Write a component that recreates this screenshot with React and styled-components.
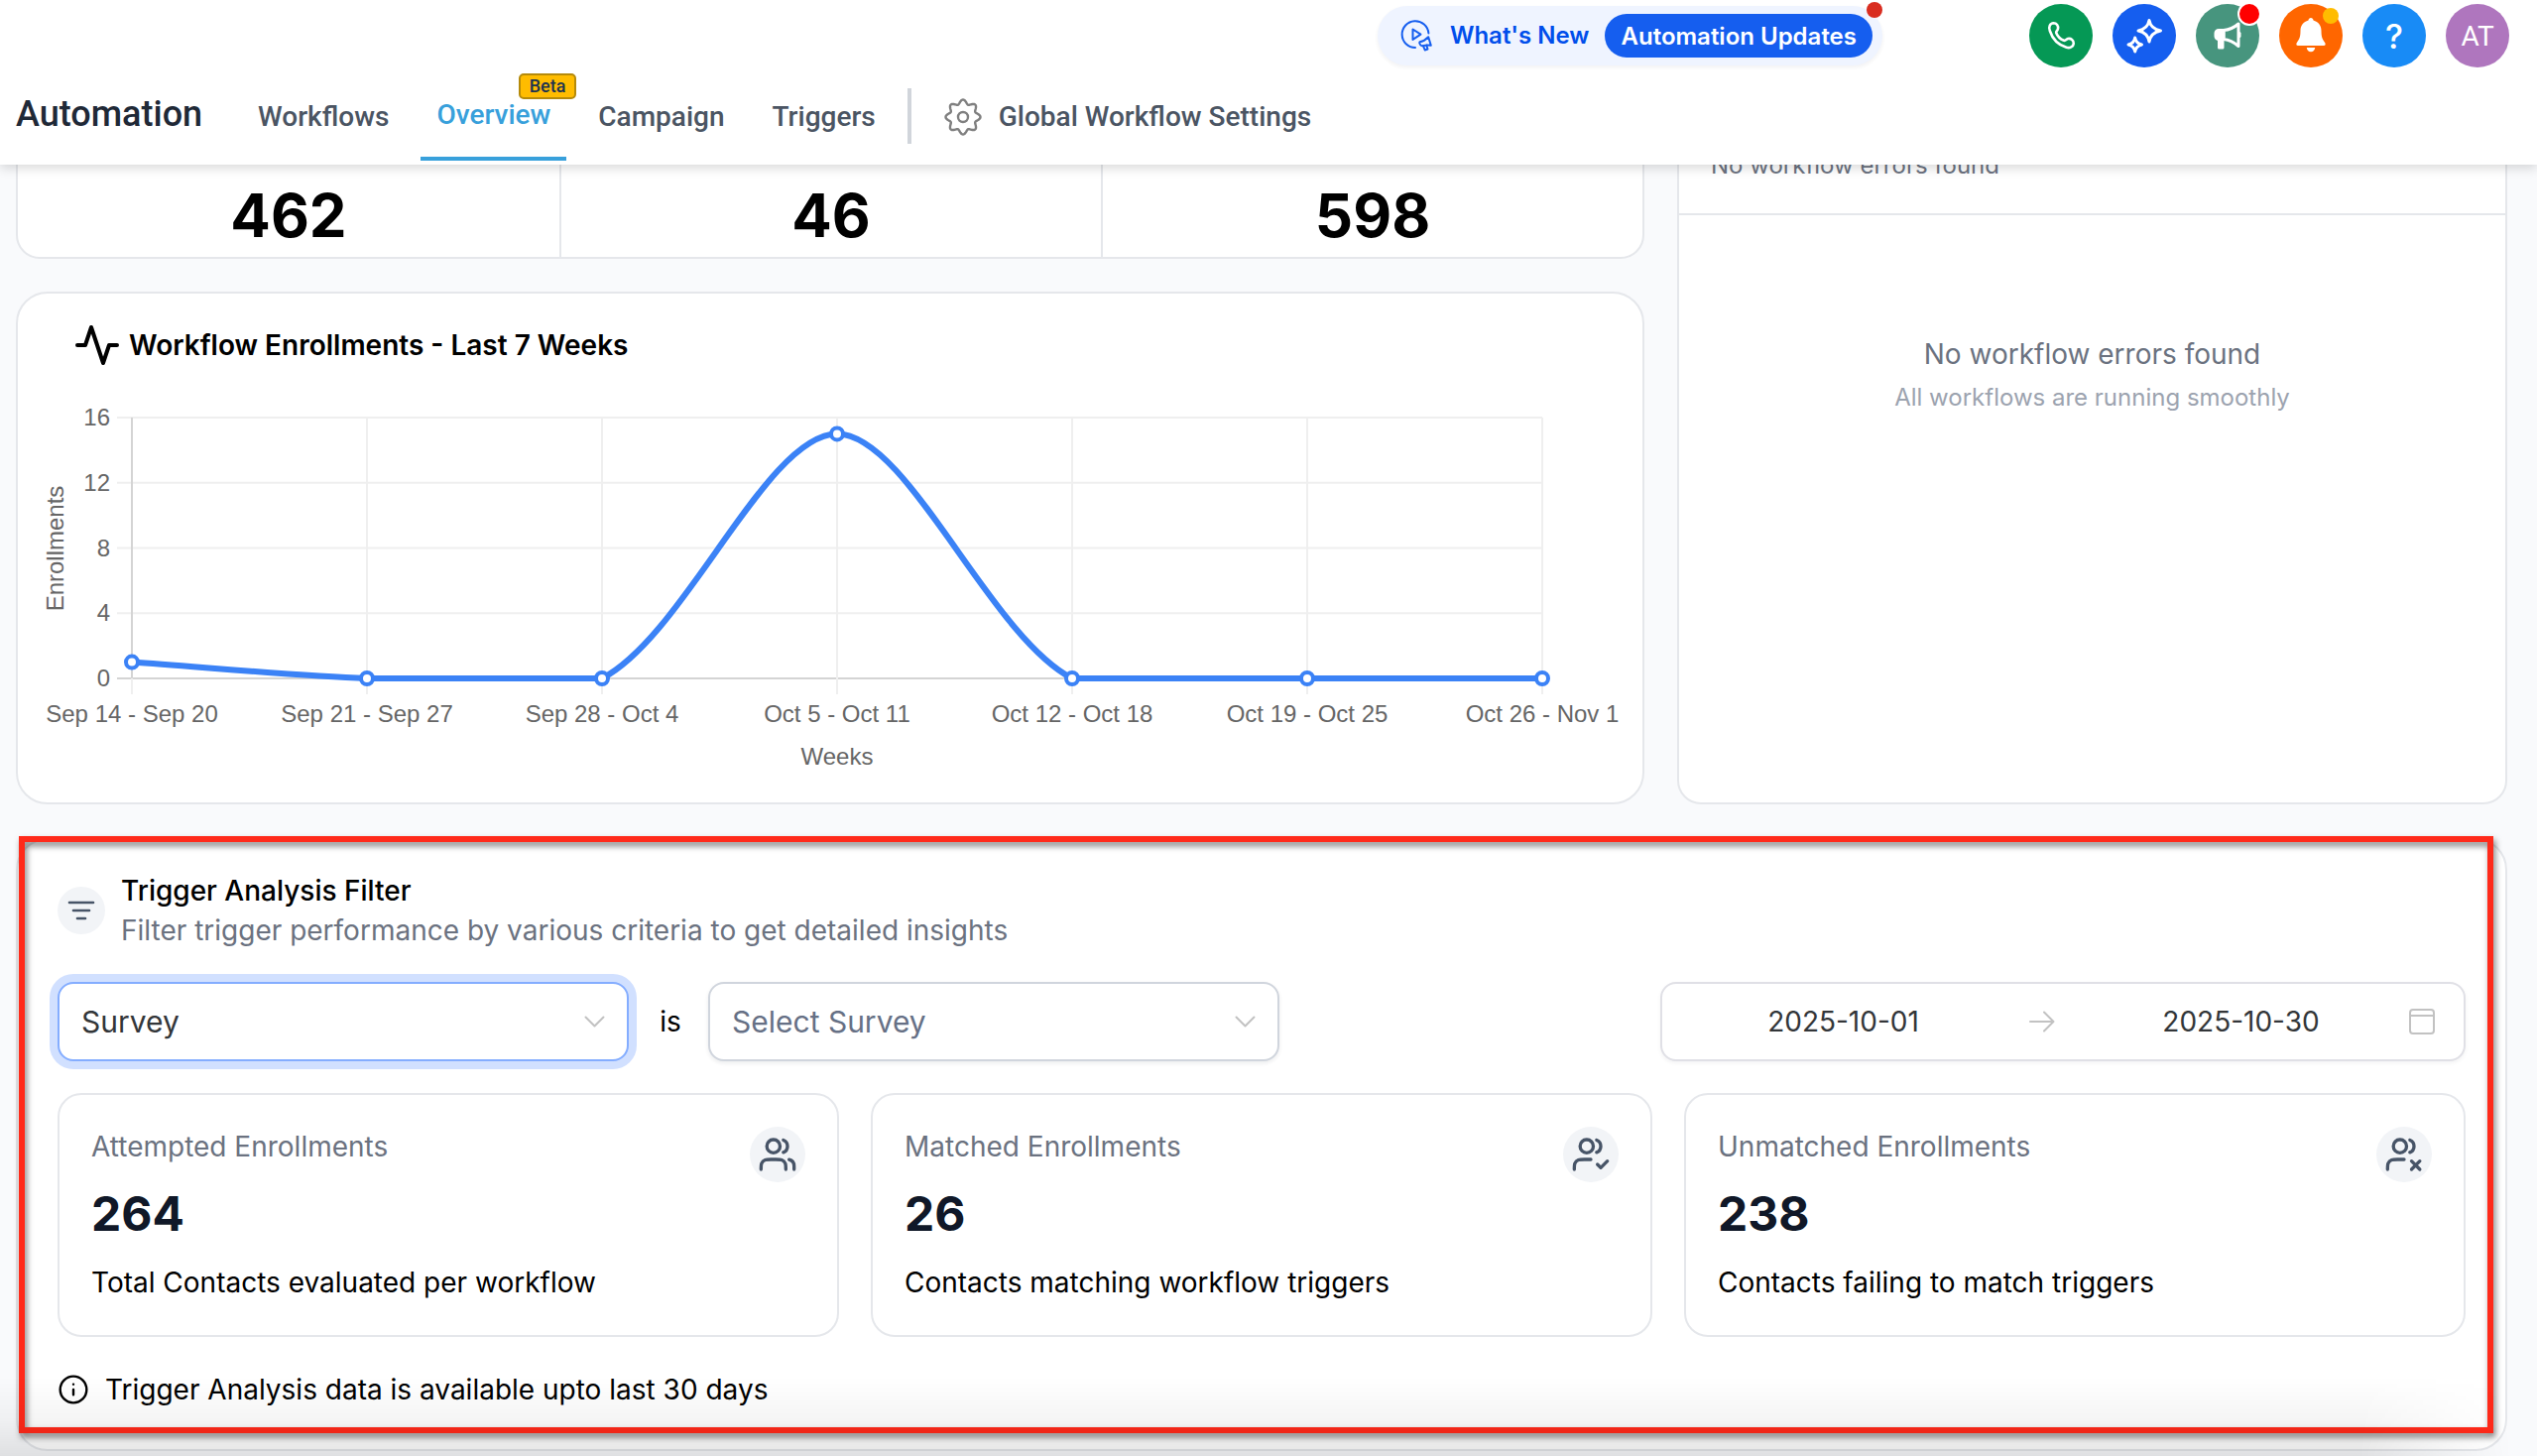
import React from 'react';
import styled, { createGlobalStyle } from 'styled-components';

const GlobalStyle = createGlobalStyle`
    * {
        box-sizing: border-box;
    }

    body {
        margin: 0;
        background: #f9fafc;
        color: #000;
        font-family: Inter, "Liberation Sans", sans-serif;
        font-size: 28px;
        line-height: 40px;
    }

    h1, h2, p {
        margin: 0;
    }
`;

// data
const tabs = [
    { label: 'Workflows' },
    { label: 'Overview', active: true, badge: 'Beta' },
    { label: 'Campaign' },
    { label: 'Triggers' },
];

const stats = [462, 46, 598];

const weeks = [
    { label: 'Sep 14 - Sep 20', value: 1 },
    { label: 'Sep 21 - Sep 27', value: 0 },
    { label: 'Sep 28 - Oct 4', value: 0 },
    { label: 'Oct 5 - Oct 11', value: 15 },
    { label: 'Oct 12 - Oct 18', value: 0 },
    { label: 'Oct 19 - Oct 25', value: 0 },
    { label: 'Oct 26 - Nov 1', value: 0 },
];

const USER_HEAD = 'M15.5 3.29C16.97 3.88 18 5.32 18 7s-1.03 3.12-2.5 3.71M13.5 7a4 4 0 1 1-8 0 4 4 0 0 1 8 0Z';
const USER_HALF = 'M12 15H8c-1.86 0-2.8 0-3.53.3a4 4 0 0 0-2.17 2.17C2 18.2 2 19.14 2 21';

const results = [
    {
        label: 'Attempted Enrollments',
        value: 264,
        note: 'Total Contacts evaluated per workflow',
        icon: 'M22 21v-2a4 4 0 0 0-3-3.87M17 21c0-1.86 0-2.8-.3-3.53a4 4 0 0 0-2.17-2.17C13.8 15 12.86 15 11 15H8c-1.86 0-2.8 0-3.53.3a4 4 0 0 0-2.17 2.17C2 18.2 2 19.14 2 21',
    },
    {
        label: 'Matched Enrollments',
        value: 26,
        note: 'Contacts matching workflow triggers',
        icon: `${USER_HALF}M16 18l2 2 4-4`,
    },
    {
        label: 'Unmatched Enrollments',
        value: 238,
        note: 'Contacts failing to match triggers',
        icon: `${USER_HALF}M16.5 16l5 5M21.5 16l-5 5`,
    },
];

// header
const Header = styled.header`
    position: relative;
    z-index: 2;
    padding-bottom: 4px;
    background: #fff;
    box-shadow: 0 4px 10px rgba(0, 0, 0, 0.14);
`;

const TopBar = styled.div`
    display: flex;
    align-items: center;
    justify-content: flex-end;
    gap: 148px;
    height: 72px;
    padding-right: 28px;
`;

const NewsPill = styled.div`
    position: relative;
    display: flex;
    align-items: center;
    height: 60px;
    padding: 0 10px 0 23px;
    border-radius: 30px;
    background: #eff4ff;
    box-shadow: 0 2px 4px rgba(16, 24, 40, 0.06);
`;

const NewsLink = styled.a`
    display: flex;
    align-items: center;
    gap: 16px;
    margin-right: 16px;
    color: #004eeb;
    font-size: 24px;
    font-weight: 600;
    text-decoration: none;
`;

const UpdatesButton = styled.button`
    height: 44px;
    padding: 0 16px;
    border: 0;
    border-radius: 22px;
    background: #155eef;
    color: #fff;
    font: 600 24px Inter, sans-serif;
`;

const Dot = styled.span`
    position: absolute;
    top: ${(p) => p.$top}px;
    right: ${(p) => p.$right}px;
    width: ${(p) => p.$size}px;
    height: ${(p) => p.$size}px;
    border-radius: 50%;
    background: ${(p) => p.$color};
    box-shadow: ${(p) => (p.$ring ? '0 0 0 2px #fff' : 'none')};
`;

const Actions = styled.div`
    display: flex;
    gap: 20px;
`;

const RoundButton = styled.button`
    position: relative;
    display: flex;
    align-items: center;
    justify-content: center;
    width: 64px;
    height: 64px;
    padding: 0;
    border: 0;
    border-radius: 50%;
    background: ${(p) => p.$color};
    color: #fff;
    font-family: ${(p) => (p.$avatar ? 'Roboto' : 'Inter')}, sans-serif;
    font-size: ${(p) => (p.$avatar ? 28 : 34)}px;
    font-weight: ${(p) => (p.$avatar ? 400 : 500)};
`;

const Nav = styled.nav`
    display: flex;
    align-items: center;
    height: 90px;
    padding-left: 16px;
    font-family: Roboto, sans-serif;
    font-weight: 500;
`;

const PageTitle = styled.h1`
    margin-right: 40px;
    padding-bottom: 4px;
    color: #1f2937;
    font-size: 36px;
    font-weight: 500;
`;

const Tab = styled.a`
    position: relative;
    display: flex;
    align-items: center;
    gap: 16px;
    height: 90px;
    margin-right: 16px;
    padding: 2px 16px 0;
    border-bottom: ${(p) => (p.$active ? '4px solid #38a0db' : '0')};
    color: ${(p) => (p.$active ? '#38a0db' : '#4b5563')};
    text-decoration: none;
`;

const Badge = styled.span`
    position: absolute;
    top: 2px;
    right: -10px;
    height: 26px;
    padding: 0 9px;
    border: 2px solid #b58a0a;
    border-radius: 5px;
    background: #ffbc00;
    color: #1c3350;
    font-size: 18px;
    line-height: 22px;
`;

const Divider = styled.span`
    width: 4px;
    height: 56px;
    margin-right: 16px;
    background: #d1d5db;
`;

// content
const Main = styled.main`
    position: relative;
    overflow: hidden;
`;

const Content = styled.div`
    display: grid;
    grid-template-columns: minmax(0, 1fr) minmax(0, 837px);
    gap: 34px 33px;
    margin-top: -42px;
    padding: 0 30px 5px 16px;
`;

const LeftColumn = styled.div`
    display: flex;
    flex-direction: column;
    gap: 33px;
`;

const Card = styled.section`
    border: 2px solid #e5e7eb;
    border-radius: ${(p) => p.$radius || 24}px;
    background: #fff;
`;

const StatsCard = styled(Card)`
    display: grid;
    grid-template-columns: repeat(3, 1fr);
`;

const StatCell = styled.div`
    display: flex;
    align-items: flex-end;
    justify-content: center;
    height: 133px;
    padding-bottom: 6px;
    font-size: 60px;
    font-weight: 700;
    line-height: 72px;

    & + & {
        border-left: 2px solid #e5e7eb;
    }
`;

const ChartCard = styled(Card)`
    padding: 28px 22px 0;
`;

const ChartTitle = styled.h2`
    display: flex;
    align-items: center;
    gap: 8px;
    height: 48px;
    padding-left: 34px;
    font-size: 28px;
    font-weight: 600;
`;

const ChartSvg = styled.svg`
    display: block;
    width: 100%;
    fill: #666;
    font-family: "Liberation Sans", Arial, sans-serif;
    font-size: 24px;
`;

const ErrorsHead = styled.p`
    padding: 25px 32px 32px;
    border-bottom: 2px solid #e5e7eb;
    color: #6b7280;
    font-size: 24px;
    line-height: 32px;
`;

const EmptyState = styled.div`
    display: flex;
    flex-direction: column;
    align-items: center;
    gap: 8px;
    padding-top: 120px;
    color: #6b7280;
`;

const EmptyHint = styled.p`
    color: #9ca3af;
    font-size: 24px;
    line-height: 32px;
`;

const FilterCard = styled(Card)`
    position: relative;
    display: flex;
    flex-direction: column;
    gap: 32px;
    grid-column: 1 / -1;
    padding: 31px 40px 40px;
`;

const FilterHead = styled.div`
    display: flex;
    align-items: center;
    gap: 16px;
`;

const IconCircle = styled.span`
    display: flex;
    flex: none;
    align-items: center;
    justify-content: center;
    width: ${(p) => p.$size}px;
    height: ${(p) => p.$size}px;
    border-radius: 50%;
    background: #f2f4f7;
    color: #475467;
`;

const FilterTitle = styled.h2`
    font-size: 28px;
    font-weight: 500;
`;

const Muted = styled.p`
    color: #6b7280;
`;

const FilterRow = styled.div`
    display: flex;
    align-items: center;
`;

const SelectBox = styled.div`
    position: relative;
    display: flex;
    align-items: center;
    width: 576px;

    svg {
        position: absolute;
        right: 22px;
        pointer-events: none;
    }
`;

const Select = styled.select`
    width: 100%;
    height: 80px;
    padding: 0 22px;
    border: 2px solid ${(p) => (p.$focused ? '#84adff' : '#d0d5dd')};
    border-radius: 16px;
    outline: 0;
    background: #fff;
    box-shadow: ${(p) => (p.$focused ? '0 0 0 8px #d1e0ff' : '0 2px 4px rgba(16, 24, 40, 0.08)')};
    color: ${(p) => (p.$focused ? '#333639' : '#667085')};
    font: 400 30px Inter, sans-serif;
    appearance: none;
`;

const Is = styled.span`
    width: 80px;
    padding-left: 4px;
    text-align: center;
`;

const DateRange = styled.div`
    display: flex;
    align-items: center;
    width: 812px;
    height: 80px;
    margin-left: auto;
    padding: 0 28px 0 22px;
    border: 2px solid #e0e0e6;
    border-radius: 16px;
    background: #fff;
    box-shadow: 0 2px 4px rgba(16, 24, 40, 0.05);
`;

const DateInput = styled.input`
    flex: 1;
    min-width: 0;
    padding: 0;
    border: 0;
    outline: 0;
    background: transparent;
    color: #333639;
    font: 400 28px Inter, sans-serif;
    text-align: center;
`;

const DateArrow = styled.span`
    display: flex;
    justify-content: center;
    width: 80px;
`;

const CalendarIcon = styled.svg`
    flex: none;
    margin-left: 8px;
`;

const ResultGrid = styled.div`
    display: grid;
    grid-template-columns: repeat(3, 1fr);
    gap: 32px;
`;

const ResultCard = styled(Card)`
    padding: 32px 32px 33px;
`;

const ResultHead = styled.div`
    display: flex;
    justify-content: space-between;
    height: 56px;
`;

const ResultValue = styled.p`
    margin: 4px 0 21px;
    color: #101828;
    font-size: 48px;
    font-weight: 700;
    line-height: 56px;
`;

const InfoRow = styled.p`
    display: flex;
    align-items: center;
    gap: 16px;
    padding-top: 1px;
`;

// red frame that marks the whole filter section
const Highlight = styled.div`
    position: absolute;
    top: -4px;
    right: 12px;
    bottom: 16px;
    left: 1px;
    border: 6px solid #ff2a1a;
    filter: drop-shadow(2px 4px 3px rgba(0, 0, 0, 0.5));
    pointer-events: none;
`;

const BottomShade = styled.div`
    position: absolute;
    right: 0;
    bottom: 0;
    left: 0;
    height: 80px;
    background: linear-gradient(to bottom, rgba(0, 0, 0, 0), rgba(0, 0, 0, 0.04) 55%, rgba(0, 0, 0, 0.1));
    mask-image: linear-gradient(to right, #000 93%, transparent 99%);
    pointer-events: none;
`;

// icons
const LineIcon = ({ d, size, width = 2, color = 'currentColor' }) => (
    <svg width={size} height={size} viewBox="0 0 24 24" fill="none" stroke={color} strokeWidth={width} strokeLinecap="round" strokeLinejoin="round" aria-hidden="true">
        <path d={d} />
    </svg>
);

const ActionIcon = ({ children, width = 3 }) => (
    <svg width="64" height="64" viewBox="0 0 64 64" fill="none" stroke="#fff" strokeWidth={width} strokeLinejoin="round" strokeLinecap="round" aria-hidden="true">
        {children}
    </svg>
);

const GearIcon = () => {
    const points = [];
    for (let i = 0; i < 160; i += 1) {
        const a = (i / 160) * Math.PI * 2;
        const r = 15.4 + 2.1 * Math.cos(a * 8);
        points.push(`${(20 + r * Math.sin(a)).toFixed(2)},${(20 - r * Math.cos(a)).toFixed(2)}`);
    }
    return (
        <svg width="40" height="40" viewBox="0 0 40 40" fill="none" stroke="#808080" strokeWidth="2.4" strokeLinejoin="round" aria-hidden="true">
            <polygon points={points.join(' ')} />
            <circle cx="20" cy="20" r="5" />
        </svg>
    );
};

const NewsIcon = () => (
    <svg width="34" height="34" viewBox="0 0 34 34" fill="none" stroke="#155eef" strokeWidth="2" strokeLinejoin="round" strokeLinecap="round" aria-hidden="true">
        <path d="M28.4 14.5A13.4 13.4 0 1 0 15 29" />
        <path d="M12.5 10.5v10.4l8-5.2Z" />
        <path d="M19.5 23.2c3-.4 6-2.2 8.7-5l2.6 8.6c-2.9-.6-5.2-.5-7.8.3-2.4 1-4.5-2.7-3.5-3.9Z" />
        <path d="M23 27.2l1.7 4.3 2.8-1-1.2-3.9" />
    </svg>
);

// chart: the control points of the curve stay inside the plot
const LEFT = 93;
const STEP = 237;
const TOP = 49;
const BOTTOM = 312;
const MAX = 16;
const TENSION = 0.3;

const toY = (value) => BOTTOM - (value / MAX) * (BOTTOM - TOP);

const buildPath = (pts) => {
    const cap = (y) => Math.min(BOTTOM, Math.max(TOP, y));
    const controls = pts.map((p, i) => {
        const prev = pts[i - 1] || p;
        const next = pts[i + 1] || p;
        const before = Math.hypot(p.x - prev.x, p.y - prev.y);
        const after = Math.hypot(next.x - p.x, next.y - p.y);
        const a = (TENSION * before) / (before + after);
        const b = (TENSION * after) / (before + after);
        return {
            inX: p.x - a * (next.x - prev.x),
            inY: cap(p.y - a * (next.y - prev.y)),
            outX: p.x + b * (next.x - prev.x),
            outY: cap(p.y + b * (next.y - prev.y)),
        };
    });
    return pts.slice(1).reduce((d, p, i) => {
        const from = controls[i];
        const to = controls[i + 1];
        return `${d}C${from.outX} ${from.outY} ${to.inX} ${to.inY} ${p.x} ${p.y}`;
    }, `M${pts[0].x} ${pts[0].y}`);
};

const EnrollmentChart = () => {
    const pts = weeks.map((w, i) => ({ x: LEFT + i * STEP, y: toY(w.value), label: w.label }));
    const right = LEFT + STEP * (weeks.length - 1);
    return (
        <ChartSvg viewBox="0 0 1594 437" role="img" aria-label="Workflow enrollments per week">
            {[16, 12, 8, 4, 0].map((v) => (
                <g key={v}>
                    <line x1={LEFT - 15} x2={right} y1={toY(v)} y2={toY(v)} stroke={v ? '#efefef' : '#d4d4d4'} strokeWidth="2" />
                    <text x={LEFT - 22} y={toY(v) + 8} textAnchor="end">{v}</text>
                </g>
            ))}
            {pts.map((p, i) => (
                <g key={p.label}>
                    <line x1={p.x} x2={p.x} y1={TOP} y2={BOTTOM + 16} stroke="#efefef" strokeWidth="2" />
                    {i === 0 && <line x1={p.x} x2={p.x} y1={TOP} y2={BOTTOM} stroke="#d4d4d4" strokeWidth="2" />}
                    <text x={p.x} y="356" textAnchor="middle">{p.label}</text>
                </g>
            ))}
            <text x={LEFT + STEP * 3} y="399" textAnchor="middle">Weeks</text>
            <text transform="translate(24 181) rotate(-90)" textAnchor="middle">Enrollments</text>
            <path d={buildPath(pts)} fill="none" stroke="#3b82f6" strokeWidth="6" />
            {pts.map((p) => (
                <circle key={p.label} cx={p.x} cy={p.y} r="6" fill="#fff" stroke="#3b82f6" strokeWidth="4" />
            ))}
        </ChartSvg>
    );
};

const Chevron = () => (
    <svg width="24" height="24" viewBox="0 0 24 24" fill="none" stroke="#c2c2c2" strokeWidth="2" strokeLinecap="round" strokeLinejoin="round" aria-hidden="true">
        <path d="M2.5 7.5l9 9 9-9" />
    </svg>
);

const App = () => (
    <>
        <GlobalStyle />
        <Header>
            <TopBar>
                <NewsPill>
                    <NewsLink href="#whats-new">
                        <NewsIcon />
                        What's New
                    </NewsLink>
                    <UpdatesButton type="button">Automation Updates</UpdatesButton>
                    <Dot $top={-4} $right={0} $size={16} $color="#d92d20" />
                </NewsPill>
                <Actions>
                    <RoundButton type="button" $color="#059855" aria-label="Call">
                        <ActionIcon width={2.6}>
                            <path d="M20.8 27C19.2 23 21 19.5 24.5 19.3c3.2 0 5 2.9 4.5 5.7-.4 2-2.2 2.5-1.8 4 1.3 3.5 4.3 6.5 7.8 7.8 1.8.5 2.2-1.2 4-1.8 3-.7 6 1.5 5.8 4.8-.3 3.2-3.8 5.2-7.3 4C29.5 41.3 23.5 35.5 20.8 27Z" />
                        </ActionIcon>
                    </RoundButton>
                    <RoundButton type="button" $color="#155eef" aria-label="Assistant">
                        <ActionIcon>
                            <path d="M37 16.5Q38.5 25 48.5 27 38.5 29 37 38 35.5 29 26 27 35.5 25 37 16.5Z" />
                            <path d="M22.7 34Q23.6 39.5 29.5 41 23.6 42.5 22.7 48 21.8 42.5 16 41 21.8 39.5 22.7 34Z" />
                        </ActionIcon>
                    </RoundButton>
                    <RoundButton type="button" $color="#47957e" aria-label="Announcements">
                        <ActionIcon>
                            <path d="M28 26.5h-5a3 3 0 0 0-3 3v3a3 3 0 0 0 3 3h5Z" fill="#fff" />
                            <path d="M23.5 35v9h3.5v-9Z" fill="#fff" />
                            <path d="M28 26.5c6-.5 11-3 15-6.5v22.5c-4-3.500-9-6.500-15-7Z" />
                            <path d="M44 29.5v3" />
                        </ActionIcon>
                        <Dot $top={0} $right={0} $size={20} $color="#ff0000" $ring />
                    </RoundButton>
                    <RoundButton type="button" $color="#ff6600" aria-label="Notifications">
                        <ActionIcon width={0}>
                            <path fill="#fff" d="M32 14c1.4 0 2.4 1 2.5 2.6C39.5 18 42.5 22 42.5 27c0 6 1 8.5 3.8 12.2.8 1.3.2 2.8-1.3 2.8H19c-1.5 0-2.1-1.5-1.3-2.8C20.5 35.5 21.5 33 21.5 27c0-5 3-9 8-10.4C29.6 15 30.6 14 32 14Z" />
                            <path fill="#fff" d="M27.8 44h8.4a4.2 4.2 0 0 1-8.4 0Z" />
                        </ActionIcon>
                        <Dot $top={4} $right={4} $size={16} $color="#ffbc00" />
                    </RoundButton>
                    <RoundButton type="button" $color="#188bf6" aria-label="Help">?</RoundButton>
                    <RoundButton type="button" $color="#af76be" $avatar>AT</RoundButton>
                </Actions>
            </TopBar>
            <Nav>
                <PageTitle>Automation</PageTitle>
                {tabs.map((tab) => (
                    <Tab key={tab.label} href={`#${tab.label.toLowerCase()}`} $active={tab.active}>
                        {tab.label}
                        {tab.badge && <Badge>{tab.badge}</Badge>}
                    </Tab>
                ))}
                <Divider />
                <Tab href="#settings">
                    <GearIcon />
                    Global Workflow Settings
                </Tab>
            </Nav>
        </Header>

        <Main>
            <Content>
                <LeftColumn>
                    <StatsCard>
                        {stats.map((value) => (
                            <StatCell key={value}>{value}</StatCell>
                        ))}
                    </StatsCard>
                    <ChartCard $radius={32}>
                        <ChartTitle>
                            <LineIcon size={48} d="M22 12h-4l-3 9L9 3l-3 9H2" />
                            Workflow Enrollments - Last 7 Weeks
                        </ChartTitle>
                        <EnrollmentChart />
                    </ChartCard>
                </LeftColumn>

                <Card>
                    <ErrorsHead>No workflow errors found</ErrorsHead>
                    <EmptyState>
                        <p>No workflow errors found</p>
                        <EmptyHint>All workflows are running smoothly</EmptyHint>
                    </EmptyState>
                </Card>

                <FilterCard $radius={32}>
                    <FilterHead>
                        <IconCircle $size={48}>
                            <LineIcon size={32} d="M6 12h12M3 6h18M9 18h6" />
                        </IconCircle>
                        <div>
                            <FilterTitle>Trigger Analysis Filter</FilterTitle>
                            <Muted>Filter trigger performance by various criteria to get detailed insights</Muted>
                        </div>
                    </FilterHead>

                    <FilterRow>
                        <SelectBox>
                            <Select $focused aria-label="Filter type">
                                <option>Survey</option>
                            </Select>
                            <Chevron />
                        </SelectBox>
                        <Is>is</Is>
                        <SelectBox>
                            <Select aria-label="Survey">
                                <option>Select Survey</option>
                            </Select>
                            <Chevron />
                        </SelectBox>
                        <DateRange>
                            <DateInput type="text" defaultValue="2025-10-01" aria-label="Start date" />
                            <DateArrow>
                                <svg width="28" height="28" viewBox="0 0 28 28" fill="none" stroke="#c2c2c2" strokeWidth="2" strokeLinecap="round" strokeLinejoin="round" aria-hidden="true">
                                    <path d="M2 14h23M16 4.5l9.500 9.500-9.500 9.500" />
                                </svg>
                            </DateArrow>
                            <DateInput type="text" defaultValue="2025-10-30" aria-label="End date" />
                            <CalendarIcon width="28" height="28" viewBox="0 0 28 28" fill="none" stroke="#c2c2c2" strokeWidth="2" aria-hidden="true">
                                <rect x="2" y="2" width="24" height="24" rx="3" />
                                <path d="M2 8h24" />
                            </CalendarIcon>
                        </DateRange>
                    </FilterRow>

                    <ResultGrid>
                        {results.map((item) => (
                            <ResultCard key={item.label}>
                                <ResultHead>
                                    <Muted>{item.label}</Muted>
                                    <IconCircle $size={56}>
                                        <LineIcon size={40} d={USER_HEAD + item.icon} />
                                    </IconCircle>
                                </ResultHead>
                                <ResultValue>{item.value}</ResultValue>
                                <p>{item.note}</p>
                            </ResultCard>
                        ))}
                    </ResultGrid>

                    <InfoRow>
                        <LineIcon size={32} width={1.8} d="M12 16v-4M12 8h.01M22 12a10 10 0 1 1-20 0 10 10 0 0 1 20 0Z" />
                        Trigger Analysis data is available upto last 30 days
                    </InfoRow>
                    <Highlight />
                </FilterCard>
            </Content>
            <BottomShade />
        </Main>
    </>
);

export default App;
